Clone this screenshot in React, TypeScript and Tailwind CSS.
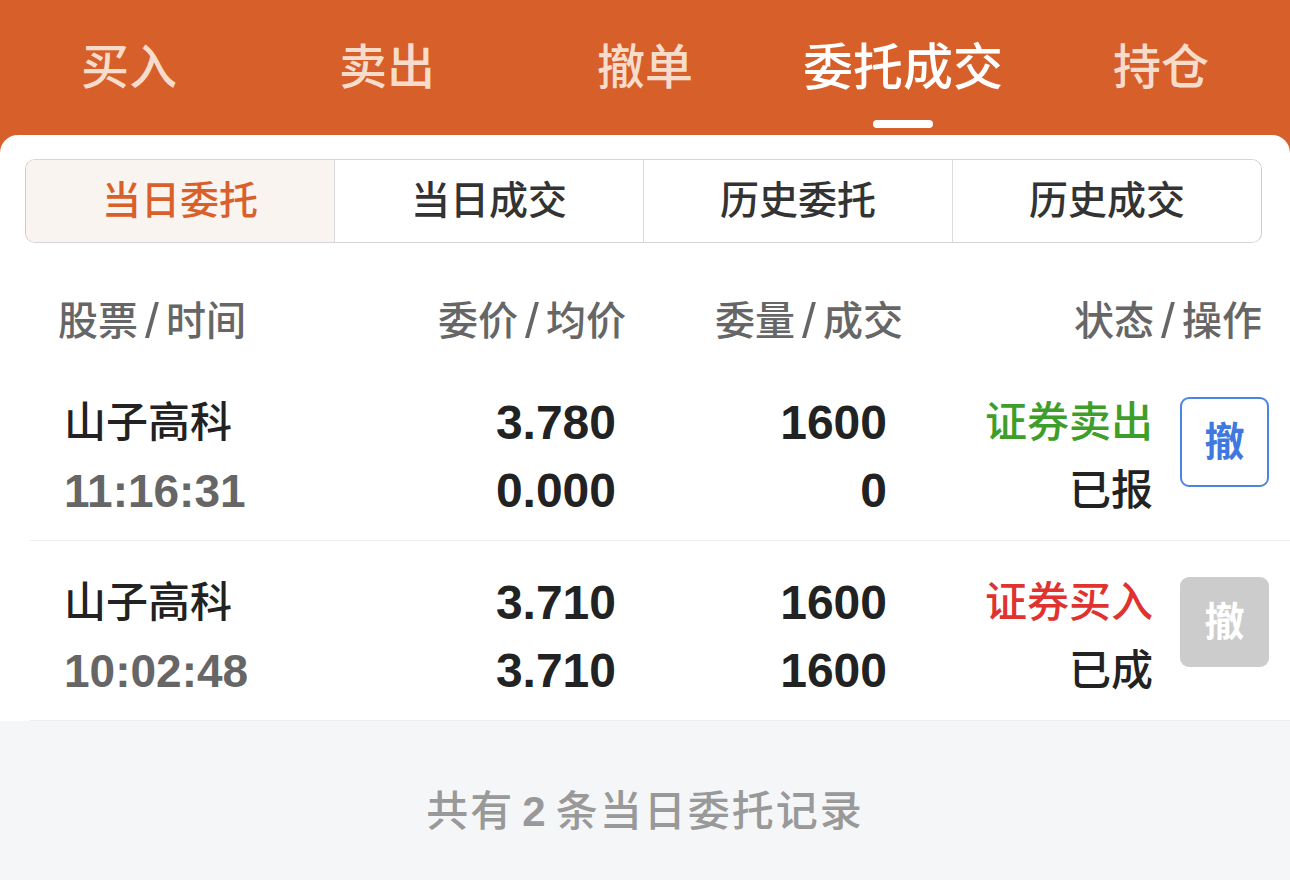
import React from "react";

const FONT = { fontFamily: '"Liberation Sans", "Noto Sans CJK SC", sans-serif' };

const navs = ["买入", "卖出", "撤单", "委托成交", "持仓"];
const tabs = ["当日委托", "当日成交", "历史委托", "历史成交"];

type Row = {
  name: string;
  time: string;
  p1: string;
  p2: string;
  q1: string;
  q2: string;
  type: string;
  buy: boolean;
  status: string;
  active: boolean;
};

const rows: Row[] = [
  { name: "山子高科", time: "11:16:31", p1: "3.780", p2: "0.000", q1: "1600", q2: "0", type: "证券卖出", buy: false, status: "已报", active: true },
  { name: "山子高科", time: "10:02:48", p1: "3.710", p2: "3.710", q1: "1600", q2: "1600", type: "证券买入", buy: true, status: "已成", active: false },
];

function Head({ a, b }: { a: string; b: string }) {
  return (
    <span className="inline-flex items-center">
      {a}
      <span className="mx-[7px] text-[50px] leading-[40px] font-normal">/</span>
      {b}
    </span>
  );
}

export default function App() {
  return (
    <div className="w-[1290px] h-[880px] bg-[#d75f2a] flex flex-col overflow-hidden" style={FONT}>
      {/* top nav */}
      <div className="h-[135px] shrink-0 grid grid-cols-5">
        {navs.map((n, i) => (
          <div key={n} className="relative flex items-start justify-center pt-[38px]">
            <span
              className={
                "leading-[60px] font-medium " +
                (i === 3 ? "text-white text-[50px]" : "text-[#f7dccb] text-[48px]")
              }
            >
              {n}
            </span>
            {i === 3 && (
              <div className="absolute left-1/2 -translate-x-1/2 top-[120px] w-[60px] h-[8px] rounded-full bg-white" />
            )}
          </div>
        ))}
      </div>

      {/* card */}
      <div className="flex-1 bg-white rounded-t-[18px] flex flex-col">
        {/* segmented tabs */}
        <div className="mt-[24px] mx-[25px] w-[1237px] h-[84px] flex rounded-[10px] border border-[#d6d6da] border-l-[#e6c2ac] border-r-[#e6c2ac] overflow-hidden">
          {tabs.map((t, i) => (
            <div
              key={t}
              className={
                "flex-1 flex items-center justify-center text-[39px] font-medium " +
                (i > 0 ? "border-l border-[#dcdcde] " : "") +
                (i === 0 ? "bg-[#faf4f0] text-[#d9602a]" : "bg-white text-[#333333]")
              }
            >
              {t}
            </div>
          ))}
        </div>

        {/* header */}
        <div className="mt-[38px] h-[80px] flex items-center text-[40px] font-medium text-[#666666]">
          <div className="pl-[58px] w-[420px]">
            <Head a="股票" b="时间" />
          </div>
          <div className="w-[206px] flex justify-end">
            <Head a="委价" b="均价" />
          </div>
          <div className="w-[277px] flex justify-end">
            <Head a="委量" b="成交" />
          </div>
          <div className="w-[359px] flex justify-end">
            <Head a="状态" b="操作" />
          </div>
        </div>

        {/* rows */}
        {rows.map((r, idx) => (
          <div key={idx} className="ml-[30px] h-[180px] border-b border-[#eeeeee] flex items-start pt-[28px]">
            <div className="pl-[34px] w-[370px] flex flex-col">
              <span className="text-[42px] leading-[68px] font-medium text-[#222222]">{r.name}</span>
              <span className="text-[46px] leading-[68px] font-bold text-[#666666]">{r.time}</span>
            </div>
            <div className="w-[216px] flex flex-col items-end">
              <span className="text-[48px] leading-[68px] font-bold text-[#222222]">{r.p1}</span>
              <span className="text-[48px] leading-[68px] font-bold text-[#222222]">{r.p2}</span>
            </div>
            <div className="w-[271px] flex flex-col items-end">
              <span className="text-[48px] leading-[68px] font-bold text-[#222222]">{r.q1}</span>
              <span className="text-[48px] leading-[68px] font-bold text-[#222222]">{r.q2}</span>
            </div>
            <div className="w-[266px] flex flex-col items-end">
              <span className={"text-[42px] leading-[68px] font-medium " + (r.buy ? "text-[#e0332f]" : "text-[#3f9e2a]")}>{r.type}</span>
              <span className="text-[42px] leading-[68px] font-medium text-[#222222]">{r.status}</span>
            </div>
            <div className="ml-[27px] mt-[8px]">
              {r.active ? (
                <div className="w-[89px] h-[90px] rounded-[9px] border-2 border-[#4d84e4] flex items-center justify-center text-[40px] font-bold text-[#3f78de]">
                  撤
                </div>
              ) : (
                <div className="w-[89px] h-[90px] rounded-[9px] bg-[#cccccc] flex items-center justify-center text-[40px] font-bold text-white">
                  撤
                </div>
              )}
            </div>
          </div>
        ))}

        {/* footer */}
        <div className="flex-1 bg-[#f5f6f8] flex justify-center pt-[66px]">
          <span className="text-[42px] leading-[50px] font-medium text-[#999999] tracking-[2px]">
            共有<span className="mx-[8px] font-bold">2</span>条当日委托记录
          </span>
        </div>
      </div>
    </div>
  );
}
